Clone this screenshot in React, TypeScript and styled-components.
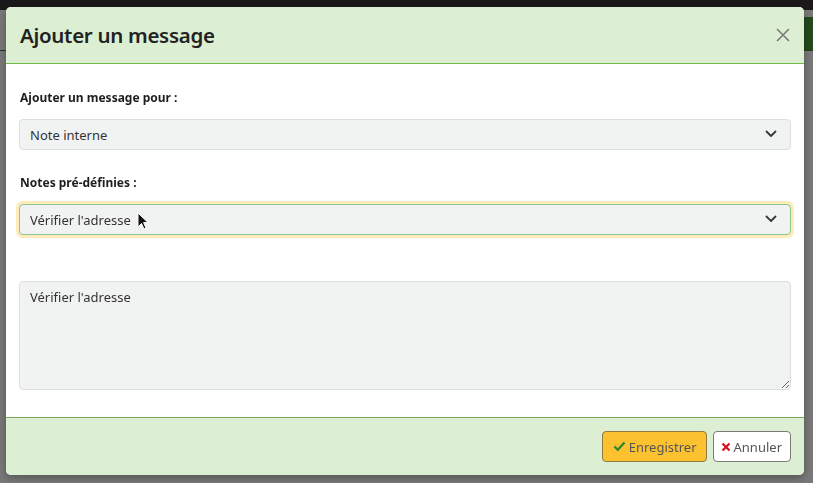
import styled, { createGlobalStyle } from 'styled-components';

const GlobalStyle = createGlobalStyle`
  html, body {
    margin: 0;
    padding: 0;
    width: 813px;
    height: 483px;
    overflow: hidden;
    font-family: 'Noto Sans', 'Open Sans', sans-serif;
  }
`;

const Page = styled.div`
  width: 813px;
  height: 483px;
  background: #fff;
  display: flex;
  flex-direction: column;
`;

const TopBar = styled.div`
  height: 10px;
  background: #383434;
`;

const Toolbar = styled.div`
  height: 33px;
  margin-top: 7px;
  display: flex;
  justify-content: space-between;
  border-bottom: 1px solid #3f8a2e;
`;

const ToolbarItem = styled.span<{ $green?: boolean }>`
  width: 40px;
  height: 100%;
  background: ${(p) => (p.$green ? '#4c9c3f' : '#fff')};
`;

const Backdrop = styled.div`
  position: fixed;
  inset: 0;
  background: rgba(0, 0, 0, 0.53);
  padding: 7px 0 0 6px;
`;

const Modal = styled.div`
  width: 798px;
  height: 468px;
  background: #fff;
  border-radius: 5px;
  overflow: hidden;
  display: flex;
  flex-direction: column;
  box-shadow: 0 3px 8px rgba(0, 0, 0, 0.3);
`;

const Header = styled.div`
  height: 56px;
  flex-shrink: 0;
  background: #dcefd3;
  border-bottom: 1px solid #72b943;
  display: flex;
  align-items: center;
  justify-content: space-between;
  padding: 0 12px 0 14px;
`;

const Title = styled.h1`
  margin: 0;
  font-size: 20.5px;
  font-weight: 600;
  color: #222;
  letter-spacing: -0.3px;
`;

const CloseButton = styled.button`
  border: none;
  background: none;
  padding: 0;
  width: 18px;
  height: 18px;
  color: #7b7b7b;
  display: flex;
  align-items: center;
  justify-content: center;
`;

const Body = styled.div`
  flex: 1;
  padding: 25px 13px 0 13px;
  display: flex;
  flex-direction: column;
`;

const Label = styled.label`
  font-size: 12px;
  font-weight: 700;
  color: #1e1e1e;
  line-height: 18px;
  padding-left: 1px;
  margin-bottom: 12px;
`;

const SelectBox = styled.div<{ $focused?: boolean }>`
  position: relative;
  height: 31px;
  box-sizing: border-box;
  background: #f1f3f2;
  border: 1px solid ${(p) => (p.$focused ? '#8cc596' : '#dcdfe0')};
  border-radius: 4px;
  display: flex;
  align-items: center;
  padding: 0 10px;
  font-size: 13px;
  color: #333;
  box-shadow: ${(p) => (p.$focused ? '0 0 0 3px #fdebb8' : 'none')};
  margin-bottom: ${(p) => (p.$focused ? '46px' : '24px')};
`;

const Chevron = styled.svg`
  position: absolute;
  right: 13px;
  top: 10px;
`;

const Cursor = styled.svg`
  position: absolute;
  left: 117px;
  top: 7px;
`;

const TextArea = styled.textarea`
  height: 109px;
  box-sizing: border-box;
  background: #f1f3f2;
  border: 1px solid #dcdfe0;
  border-radius: 4px;
  padding: 6px 10px;
  font-family: inherit;
  font-size: 13px;
  color: #333;
  resize: vertical;
  outline: none;
`;

const Footer = styled.div`
  height: 57px;
  flex-shrink: 0;
  background: #dcefd3;
  border-top: 1px solid #78a956;
  display: flex;
  justify-content: flex-end;
  align-items: center;
  gap: 6px;
  padding: 0 13px;
`;

const Button = styled.button<{ $primary?: boolean }>`
  height: 31px;
  display: flex;
  align-items: center;
  gap: 3px;
  padding: 0 ${(p) => (p.$primary ? '9px' : '8px')} 0 ${(p) => (p.$primary ? '10px' : '7px')};
  border-radius: 4px;
  font-family: inherit;
  font-size: 13px;
  color: #555;
  background: ${(p) => (p.$primary ? '#fcc12f' : '#fff')};
  border: 1px solid ${(p) => (p.$primary ? '#8f7a45' : '#7a7a7a')};
`;

const ChevronIcon = () => (
  <Chevron width="12" height="8" viewBox="0 0 12 8">
    <path d="M1.5 1.5 L6 6 L10.5 1.5" fill="none" stroke="#343a40" strokeWidth="1.8" strokeLinecap="round" strokeLinejoin="round" />
  </Chevron>
);

export default function App() {
  return (
    <Page>
      <GlobalStyle />
      <TopBar />
      <Toolbar>
        <ToolbarItem />
        <ToolbarItem $green />
      </Toolbar>
      <Backdrop>
        <Modal>
          <Header>
            <Title>Ajouter un message</Title>
            <CloseButton aria-label="Fermer">
              <svg width="14" height="14" viewBox="0 0 14 14">
                <path d="M1 1 L13 13 M13 1 L1 13" stroke="currentColor" strokeWidth="1.6" />
              </svg>
            </CloseButton>
          </Header>
          <Body>
            <Label>Ajouter un message pour :</Label>
            <SelectBox>
              Note interne
              <ChevronIcon />
            </SelectBox>
            <Label>Notes pré-définies :</Label>
            <SelectBox $focused>
              Vérifier l'adresse
              <ChevronIcon />
              <Cursor width="12" height="19" viewBox="0 0 12 19">
                <path d="M1 1 L1 15 L4.5 11.5 L7 17 L9 16 L6.6 10.6 L11 10.6 Z" fill="#111" stroke="#fff" strokeWidth="1" />
              </Cursor>
            </SelectBox>
            <TextArea defaultValue="Vérifier l'adresse" />
          </Body>
          <Footer>
            <Button $primary>
              <svg width="13" height="11" viewBox="0 0 13 11">
                <path d="M1.5 5.5 L4.8 8.8 L11.5 1.5" fill="none" stroke="#2c8a2c" strokeWidth="2.2" />
              </svg>
              Enregistrer
            </Button>
            <Button>
              <svg width="10" height="10" viewBox="0 0 10 10">
                <path d="M1.5 1.5 L8.5 8.5 M8.5 1.5 L1.5 8.5" stroke="#d4111b" strokeWidth="2.2" />
              </svg>
              Annuler
            </Button>
          </Footer>
        </Modal>
      </Backdrop>
    </Page>
  );
}
